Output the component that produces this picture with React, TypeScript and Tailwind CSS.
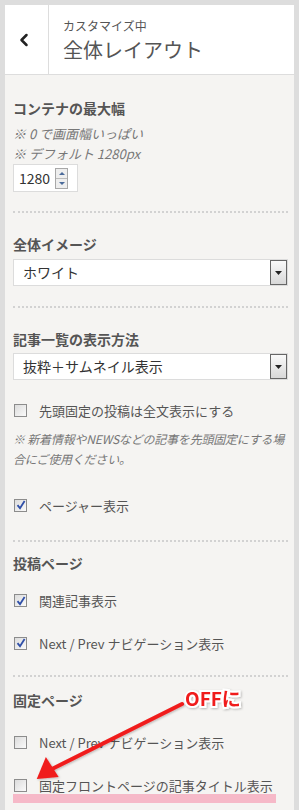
import { ChevronLeft } from 'lucide-react';

const jp = { fontFamily: '"Noto Sans CJK JP", "Noto Sans", sans-serif' };

function Checkbox({ checked }: { checked?: boolean }) {
  return (
    <span className="flex h-[13px] w-[13px] shrink-0 items-center justify-center border border-[#8c8c8c] bg-gradient-to-br from-[#dcdcdc] to-[#fafafa]">
      {checked && (
        <svg width="10" height="10" viewBox="0 0 10 10">
          <path d="M1.5 5.2 L4 8.2 L8.6 1" fill="none" stroke="#2f4fa8" strokeWidth="1.8" />
        </svg>
      )}
    </span>
  );
}

function CheckRow({ label, checked, className = '' }: { label: string; checked?: boolean; className?: string }) {
  return (
    <div className={`flex items-center gap-[12px] pl-[1px] text-[13px] text-[#555] ${className}`}>
      <Checkbox checked={checked} />
      <span>{label}</span>
    </div>
  );
}

function Heading({ children, className = '' }: { children: string; className?: string }) {
  return <p className={`text-[14px] leading-[20px] font-bold text-[#555] ${className}`}>{children}</p>;
}

function Dotted({ className = '' }: { className?: string }) {
  return <div className={`border-t-2 border-dotted border-[#d2d2d2] ${className}`} />;
}

function SelectBox({ value, className = '' }: { value: string; className?: string }) {
  return (
    <div className={`flex h-[27px] items-center border border-[#dcdcdc] bg-white pl-[9px] ${className}`}>
      <span className="flex-1 text-[14px] text-[#333]">{value}</span>
      <span className="flex h-[25px] w-[17px] items-center justify-center border border-[#666] bg-gradient-to-b from-[#fafafa] to-[#d8d8d8]">
        <svg width="7" height="4" viewBox="0 0 7 4">
          <path d="M0 0 H7 L3.5 4 Z" fill="#222" />
        </svg>
      </span>
    </div>
  );
}

export default function App() {
  return (
    <div className="relative h-[810px] w-[299px] overflow-hidden bg-[#dddddd] px-[5px] pt-[5px]" style={jp}>
      <div className="h-full bg-[#f5f4f2]">
        <div className="flex h-[70px] border-b border-[#dddddd] bg-white">
          <div className="flex w-[44px] items-center justify-center border-r border-[#dddddd] pr-[6px]">
            <ChevronLeft size={20} strokeWidth={3} className="text-[#222]" />
          </div>
          <div className="flex flex-col justify-center gap-[2px] pl-[14px] pt-[3px] text-[#555]">
            <span className="text-[12px] leading-[16px]">カスタマイズ中</span>
            <span className="text-[20px] leading-[28px]">全体レイアウト</span>
          </div>
        </div>

        <div className="flex flex-col pl-[8px] pr-[6px]">
          <Heading className="mt-[23px]">コンテナの最大幅</Heading>
          <p className="mt-[6px] text-[13px] leading-[20px] italic text-[#777]">※ 0 で画面幅いっぱい</p>
          <p className="text-[13px] leading-[20px] italic text-[#777]">※ デフォルト 1280px</p>
          <div className="flex h-[28px] w-[65px] items-center gap-[5px] border border-[#dcdcdc] bg-white pl-[5px]">
            <span className="text-[14px] text-[#333]">1280</span>
            <span className="flex h-[21px] w-[13px] flex-col border border-[#a8a8a8] bg-[#eeeeee]">
              <span className="flex flex-1 items-center justify-center border-b border-[#bbb]">
                <svg width="6" height="3" viewBox="0 0 6 3"><path d="M0 3 H6 L3 0 Z" fill="#4a6a9a" /></svg>
              </span>
              <span className="flex flex-1 items-center justify-center">
                <svg width="6" height="3" viewBox="0 0 6 3"><path d="M0 0 H6 L3 3 Z" fill="#4a6a9a" /></svg>
              </span>
            </span>
          </div>

          <Dotted className="mt-[19px]" />
          <Heading className="mt-[21px]">全体イメージ</Heading>
          <SelectBox value="ホワイト" className="mt-[5px]" />

          <Dotted className="mt-[20px]" />
          <Heading className="mt-[21px]">記事一覧の表示方法</Heading>
          <SelectBox value="抜粋＋サムネイル表示" className="mt-[4px]" />
          <CheckRow label="先頭固定の投稿は全文表示にする" className="mt-[21px]" />
          <div className="mt-[8px] text-[12px] leading-[20px] whitespace-nowrap italic tracking-[-0.2px] text-[#777]">
            <p>※ 新着情報やNEWSなどの記事を先頭固定にする場</p>
            <p>合にご使用ください。</p>
          </div>
          <CheckRow label="ページャー表示" checked className="mt-[27px]" />

          <Dotted className="mt-[25px]" />
          <Heading className="mt-[11px]">投稿ページ</Heading>
          <CheckRow label="関連記事表示" checked className="mt-[18px]" />
          <CheckRow label="Next / Prev ナビゲーション表示" checked className="mt-[23px]" />

          <Dotted className="mt-[22px]" />
          <Heading className="mt-[13px]">固定ページ</Heading>
          <CheckRow label="Next / Prev ナビゲーション表示" className="mt-[23px]" />
          <CheckRow label="固定フロントページの記事タイトル表示" className="mt-[23px]" />
          <div className="-mt-[1px] mr-[12px] h-[9px] bg-[#f6b9c8]" />
        </div>
      </div>

      <svg className="pointer-events-none absolute top-0 left-0" width="299" height="810" viewBox="0 0 299 810">
        <defs>
          <filter id="sh" x="-20%" y="-20%" width="140%" height="140%">
            <feDropShadow dx="1" dy="1" stdDeviation="1" floodColor="#000" floodOpacity="0.25" />
          </filter>
        </defs>
        <g filter="url(#sh)">
          <line x1="182" y1="704" x2="52" y2="769" stroke="#f01c1c" strokeWidth="4" strokeLinecap="round" />
          <path d="M36 778 L47 757 L58 778 Z" fill="#f01c1c" transform="rotate(-5 47 770)" />
        </g>
        <text
          x="185"
          y="706"
          fontSize="19"
          fontWeight="bold"
          fill="#f01c1c"
          stroke="#ffffff"
          strokeWidth="4"
          paintOrder="stroke"
          filter="url(#sh)"
          style={jp}
        >
          OFFに
        </text>
      </svg>
    </div>
  );
}
